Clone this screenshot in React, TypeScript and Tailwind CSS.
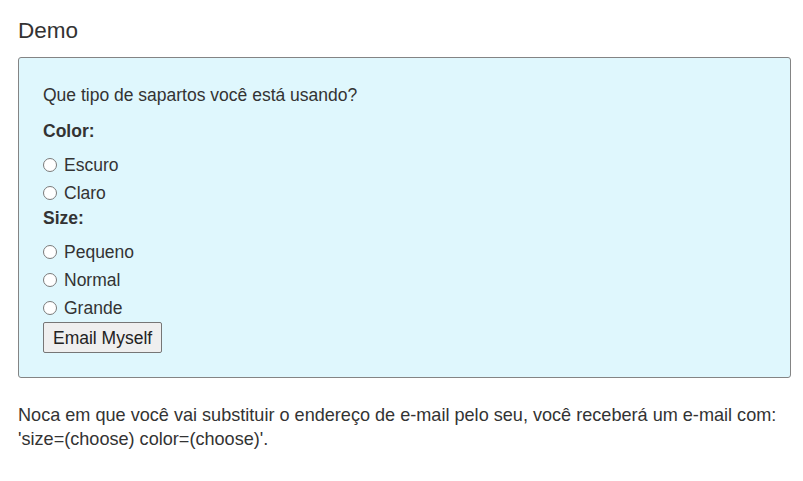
import React from 'react'

const font = { fontFamily: '"Liberation Sans", Arial, sans-serif' }

function Radio({ name, label }: { name: string; label: string }) {
  return (
    <label className="flex h-7 items-center">
      <input
        type="radio"
        name={name}
        className="m-0 h-[14px] w-[14px] appearance-none rounded-full border border-[#7a7a7a] bg-white"
      />
      <span className="ml-[7px]">{label}</span>
    </label>
  )
}

export default function App() {
  return (
    <div className="min-h-[481px] bg-white px-[18px] pt-[18px] text-[17.5px] leading-6 text-[#333]" style={font}>
      <h3 className="text-[22.5px] leading-[26px] text-[#333]">Demo</h3>

      <div className="mt-[13px] w-[773px] rounded-[3px] border border-[#848484] bg-[#dff7fd] pl-6 pr-6 pt-[25px] pb-6">
        <p>Que tipo de sapartos você está usando?</p>

        <div className="mt-3 font-bold">Color:</div>
        <div className="mt-2">
          <Radio name="color" label="Escuro" />
          <Radio name="color" label="Claro" />
        </div>

        <div className="-mt-px font-bold">Size:</div>
        <div className="mt-2">
          <Radio name="size" label="Pequeno" />
          <Radio name="size" label="Normal" />
          <Radio name="size" label="Grande" />
        </div>

        <button className="h-[31px] rounded-[2px] border border-[#767676] bg-[#efefef] px-[9px] text-[17.5px] text-[#222]">
          Email Myself
        </button>
      </div>

      <p className="mt-[25px] w-[773px] text-[18.1px]">
        Noca em que você vai substituir o endereço de e-mail pelo seu, você receberá um e-mail com:
        'size=(choose) color=(choose)'.
      </p>
    </div>
  )
}
